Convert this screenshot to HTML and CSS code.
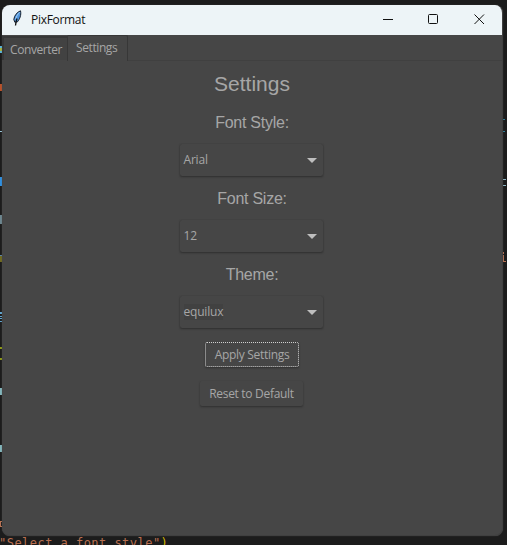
FILE: index.html
```html
<!DOCTYPE html>
<html lang="en">
<head>
<meta charset="utf-8">
<title>PixFormat</title>
<link rel="stylesheet" href="styles.css">
</head>
<body>
<!-- Editor showing behind the window -->
<svg class="editor" width="507" height="545" shape-rendering="crispEdges" aria-hidden="true">
  <path fill="#59b5d8" d="M0 46h2v2H0zM0 51h2v2H0z"/><path fill="#a9b33f" d="M0 48h2v3H0z"/>
  <path fill="#b9512a" d="M0 84h2v7H0z"/>
  <path fill="#9cc8dc" d="M0 131h2v1H0z"/>
  <path fill="#2f8fe0" d="M0 177h2v9H0z"/>
  <path fill="#6d8790" d="M0 215h2v9H0z"/>
  <path fill="#716b20" d="M0 255h2v7H0z"/><path fill="#5b86a8" d="M0 255h2v1H0z"/>
  <path fill="#62a5cf" d="M0 312h2v2H0zM0 316h2v1H0zM0 318h2v1H0zM0 321h2v1H0z"/>
  <path fill="#8d9915" d="M0 347h2v2H0zM0 358h2v2H0z"/>
  <path fill="#83b6bc" d="M0 388h2v7H0zM0 445h2v7H0z"/>
  <path fill="#b77355" d="M0 521h2v1H0zM0 522h1v4H0zM0 526h2v1H0z"/>
  <path fill="#327f98" d="M502 119h3v1h-3zM502 131h3v1h-3z"/>
  <path fill="#7d9850" d="M502 177h1v9h-1z"/><path fill="#8eb5c3" d="M503 179h3v1h-3zM503 185h3v1h-3z"/>
  <path fill="#b77355" d="M502 252h2v2h-2zM502 255h2v7h-2zM504 261h2v1h-2z"/>
</svg>
<div class="code"><span class="string">"Select a font style"</span><span class="paren">)</span></div>

<main class="window">
  <header class="titlebar">
    <svg class="feather" width="9" height="17" viewBox="0 0 9 17" aria-hidden="true">
      <path d="M7.500.8C4 2.200 1.300 5.500.8 9.500l1 2.700 2.600-.3C6.700 9.200 8.500 5 7.500.8Z" fill="#4f94dc" stroke="#17202c" stroke-width="1"/>
      <path d="M6.600 2.200C4.800 4 3.400 6.500 2.700 9" fill="none" stroke="#a4d1f5" stroke-width="1"/>
      <path d="M4 8.500C3.200 11 2.700 13 2.500 15.500" fill="none" stroke="#111" stroke-width="1.300"/>
    </svg>
    <span class="name">PixFormat</span>
    <svg class="controls" width="102" height="12" viewBox="0 0 102 12" fill="none" stroke="#111" aria-hidden="true">
      <path d="M0 6.500h10"/>
      <rect x="45.500" y="1.500" width="9" height="9" rx="1"/>
      <path d="m91.500 1.500 9.500 9.500m0-9.500-9.500 9.500"/>
    </svg>
  </header>
  <nav class="tabs">
    <span class="tab">Converter</span><span class="tab active">Settings</span><span class="rest"></span>
  </nav>
  <section class="panel">
    <h1>Settings</h1>
    <h2>Font Style:</h2>
    <div class="combo"><span class="value">Arial</span><span class="arrow"></span></div>
    <h2>Font Size:</h2>
    <div class="combo"><span class="value">12</span><span class="arrow"></span></div>
    <h2>Theme:</h2>
    <div class="combo"><span class="value selected">equilux</span><span class="arrow"></span></div>
    <button class="apply">Apply Settings</button>
    <button class="reset">Reset to Default</button>
  </section>
</main>
</body>
</html>
```
FILE: styles.css
```css
* { box-sizing: border-box; }
body {
  margin: 0;
  width: 507px;
  height: 545px;
  overflow: hidden;
  position: relative;
  background: #1c1c1c;
  padding: 5px 5px 9px 2px;
  font: 12px/16px "Open Sans", "Noto Sans", sans-serif;
  color: #a6a6a6;
}
.editor { position: absolute; left: 0; top: 0; }
.code {
  position: absolute;
  left: -1px;
  top: 535px;
  font: 12px/16px "DejaVu Sans Mono", monospace;
  letter-spacing: 0.47px;
  white-space: pre;
}
.string { color: #b96f50; }
.paren { color: #d0b500; }
.window {
  position: relative;
  width: 501px;
  height: 531px;
  border-radius: 8px;
  overflow: hidden;
  background: #464646;
  border-right: 1px solid #404040;
  border-bottom: 1px solid #404040;
  box-shadow: 0 0 1px #555;
}
.titlebar {
  height: 30px;
  display: flex;
  align-items: center;
  background: #edf4f7;
  color: #111;
  padding: 0 17px 0 11px;
}
.feather { margin-top: -3px; }
.name { margin-left: 9px; letter-spacing: -0.3px; }
.controls { margin-left: auto; margin-top: -2px; }
.tabs { display: flex; align-items: flex-end; height: 26px; }
.tab {
  width: 65px;
  height: 24px;
  margin-bottom: 1px;
  padding: 4px 0 0 6px;
  border: 0 solid #373737;
  border-width: 2px 0 0 2px;
  background: #424242;
  letter-spacing: -0.4px;
}
.tab.active {
  width: 61px;
  height: 26px;
  margin-bottom: 0;
  padding: 4px 0 0 8px;
  border-width: 1px 1px 0 1px;
  border-radius: 2px 2px 0 0;
  background: #464646;
}
.rest { flex: 1; border-bottom: 1px solid #404040; }
.panel { display: flex; flex-direction: column; align-items: center; padding-top: 11px; }
h1, h2 { margin: 0; font-family: "Liberation Sans", Arial, sans-serif; font-weight: 400; }
h1 { font-size: 21px; line-height: 24px; margin-bottom: 18px; }
h2 { font-size: 16px; line-height: 18px; letter-spacing: -0.25px; }
.combo {
  width: 143px;
  height: 32px;
  margin: 12px 2px 12px 0;
  padding: 0 6px 0 4px;
  display: flex;
  align-items: center;
  justify-content: space-between;
  border-radius: 2px;
  box-shadow: 0 0 1px #3a3a3a, 0 1px 2px #303030;
}
.combo + h2 { margin-top: 2px; }
.value { letter-spacing: -0.2px; }
.selected { background: #414141; }
.arrow {
  border: 5px solid transparent;
  border-top-color: #bebebe;
  border-bottom: 0;
}
button {
  padding: 0;
  border: 0;
  border-radius: 2px;
  background: #464646;
  color: #a6a6a6;
  font: inherit;
  letter-spacing: -0.3px;
  box-shadow: 0 1px 2px #303030;
}
.apply { width: 94px; height: 25px; margin-top: 2px; border: 1px dotted #d0d0d0; }
.reset { width: 103px; height: 25px; margin: 14px 2px 0 0; padding-left: 1px; }
```
